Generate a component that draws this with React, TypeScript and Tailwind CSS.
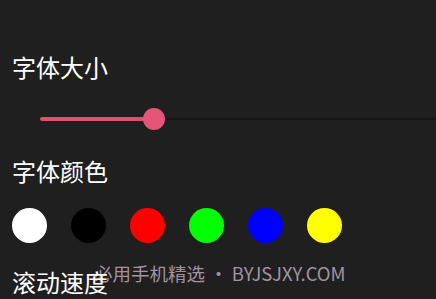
import React from 'react';

const colors = ['#ffffff', '#000000', '#ff0000', '#00ff00', '#0000ff', '#ffff00'];

export default function App() {
  const font = { fontFamily: '"Noto Sans CJK SC", "Noto Sans", sans-serif' };
  return (
    <div
      className="relative w-[436px] h-[299px] overflow-hidden bg-[#1f1f1f] text-white"
      style={font}
    >
      <div className="absolute left-[94px] top-[259px] text-[18.5px] leading-[28px] text-[#a193a1] whitespace-nowrap">
        必用手机精选 • BYJSJXY.COM
      </div>

      <div className="relative flex flex-col pl-[12px] pt-[52px]">
        <div className="text-[24px] leading-[30px]">字体大小</div>

        <div className="mt-[26px] h-[22px] flex items-center pl-[28px]">
          <div className="h-[4px] w-[106px] bg-[#e0506e] rounded-l-sm" />
          <div className="w-[22px] h-[22px] rounded-full bg-[#e5557a] -ml-[3px] shrink-0" />
          <div className="h-[2px] flex-1 bg-[#161616]" />
        </div>

        <div className="mt-[26px] text-[24px] leading-[30px]">字体颜色</div>

        <div className="mt-[22px] flex gap-[24px]">
          {colors.map((c) => (
            <div
              key={c}
              className="w-[35px] h-[35px] rounded-full"
              style={{ backgroundColor: c }}
            />
          ))}
        </div>

        <div className="mt-[24px] text-[24px] leading-[30px]">滚动速度</div>
      </div>
    </div>
  );
}
